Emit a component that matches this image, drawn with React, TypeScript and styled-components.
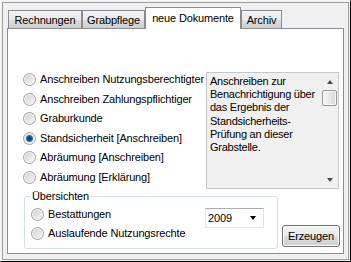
import React from 'react'
import styled, { createGlobalStyle } from 'styled-components'

const GlobalStyle = createGlobalStyle`
  html, body {
    margin: 0;
    padding: 0;
    background: #f0f0f0;
  }
  body {
    font-family: "Liberation Sans", Arial, sans-serif;
    font-size: 11px;
    letter-spacing: -0.15px;
    color: #000;
  }
`

const tabs = ['Rechnungen', 'Grabpflege', 'neue Dokumente', 'Archiv']
const tabWidths = [74, 63, 96, 41]

const options = [
  'Anschreiben Nutzungsberechtigter',
  'Anschreiben Zahlungspflichtiger',
  'Graburkunde',
  'Standsicherheit [Anschreiben]',
  'Abräumung [Anschreiben]',
  'Abräumung [Erklärung]',
]

const description =
  'Anschreiben zur\nBenachrichtigung über\ndas Ergebnis der\nStandsicherheits-\nPrüfung an dieser\nGrabstelle.'

const App = () => {
  const activeTab = 2
  const selected = 3
  return (
    <>
      <GlobalStyle />
      <Window>
        <Frame>
          <TabStrip>
            {tabs.map((t, i) => (
              <Tab key={t} $active={i === activeTab} $width={tabWidths[i]}>
                {t}
              </Tab>
            ))}
          </TabStrip>
          <Panel>
            <TopSection>
              <OptionList>
                {options.map((o, i) => (
                  <OptionRow key={o}>
                    <Radio $checked={i === selected} />
                    <Label>{o}</Label>
                  </OptionRow>
                ))}
              </OptionList>
              <InfoBox>
                <InfoText>{description}</InfoText>
                <ScrollBar>
                  <ScrollButton>
                    <ArrowUp />
                  </ScrollButton>
                  <ScrollThumb />
                  <ScrollTrack />
                  <ScrollButton>
                    <ArrowDown />
                  </ScrollButton>
                </ScrollBar>
              </InfoBox>
            </TopSection>
            <BottomSection>
              <GroupBox>
                <Legend>Übersichten</Legend>
                <GroupBody>
                  <GroupOptions>
                    <GroupRow>
                      <Radio />
                      <Label>Bestattungen</Label>
                    </GroupRow>
                    <GroupRow>
                      <Radio />
                      <Label>Auslaufende Nutzungsrechte</Label>
                    </GroupRow>
                  </GroupOptions>
                  <Combo>
                    <ComboValue>2009</ComboValue>
                    <ArrowDown $dark />
                  </Combo>
                </GroupBody>
              </GroupBox>
              <Button>Erzeugen</Button>
            </BottomSection>
          </Panel>
        </Frame>
      </Window>
    </>
  )
}
export default App

const Window = styled.div`
  width: 351px;
  height: 262px;
  box-sizing: border-box;
  border: 1px solid;
  border-color: #f7f7f7 #000 #000 #f7f7f7;
  padding: 1px;
  background: #f0f0f0;
`

const Frame = styled.div`
  height: 100%;
  box-sizing: border-box;
  border: 1px solid #a0a0a0;
  padding: 4px 0 0 4px;
`

const TabStrip = styled.div`
  display: flex;
  height: 21px;
  padding-left: 1px;
`

const Tab = styled.div<{ $active?: boolean; $width: number }>`
  box-sizing: border-box;
  width: ${(p) => p.$width}px;
  height: ${(p) => (p.$active ? 22 : 18)}px;
  margin-top: ${(p) => (p.$active ? 0 : 3)}px;
  border: 1px solid #898c95;
  border-bottom: none;
  background: ${(p) =>
    p.$active ? '#fff' : 'linear-gradient(#f2f2f2 0%, #ebebeb 50%, #dddddd 51%, #cfcfcf 100%)'};
  display: flex;
  justify-content: center;
  align-items: ${(p) => (p.$active ? 'flex-start' : 'center')};
  padding-top: ${(p) => (p.$active ? 4 : 1)}px;
  position: relative;
  z-index: ${(p) => (p.$active ? 1 : 0)};
  white-space: nowrap;
  line-height: 13px;
`

const Panel = styled.div`
  width: 337px;
  height: 226px;
  box-sizing: border-box;
  border: 1px solid #898c95;
  background: #fff;
  padding: 43px 3px 5px 15px;
  display: flex;
  flex-direction: column;
`

const TopSection = styled.div`
  display: flex;
`

const OptionList = styled.div`
  width: 183px;
  margin-top: -2px;
  display: flex;
  flex-direction: column;
`

const OptionRow = styled.div`
  height: 19.5px;
  display: flex;
  align-items: center;
  gap: 4px;
  white-space: nowrap;
`

const Radio = styled.span<{ $checked?: boolean }>`
  position: relative;
  flex: none;
  width: 13px;
  height: 13px;
  box-sizing: border-box;
  border-radius: 50%;
  border: 1px solid #a2a2a2;
  background: linear-gradient(135deg, #cfcfcf 0%, #e4e4e4 50%, #f8f8f8 100%);
  box-shadow: inset 0 0 0 1px #f4f4f4;
  &::after {
    content: '';
    display: ${(p) => (p.$checked ? 'block' : 'none')};
    position: absolute;
    left: 2px;
    top: 2px;
    width: 7px;
    height: 7px;
    border-radius: 50%;
    background: radial-gradient(circle at 50% 50%, #0b2f63 0%, #1c5a9e 45%, #5ea6e0 100%);
  }
`

const Label = styled.span`
  line-height: 13px;
`

const InfoBox = styled.div`
  width: 133px;
  height: 117px;
  box-sizing: border-box;
  border: 1px solid #c4c8cc;
  background: #f0f0f0;
  display: flex;
  margin-right: 1px;
`

const InfoText = styled.div`
  flex: 1;
  padding: 2px 0 0 3px;
  white-space: pre-line;
  line-height: 13.2px;
  letter-spacing: -0.25px;
`

const ScrollBar = styled.div`
  width: 17px;
  display: flex;
  flex-direction: column;
`

const ScrollButton = styled.div`
  height: 17px;
  display: flex;
  align-items: center;
  justify-content: center;
`

const ScrollThumb = styled.div`
  height: 16px;
  margin: 0 1px;
  box-sizing: border-box;
  border: 1px solid #979797;
  border-radius: 2px;
  background: linear-gradient(90deg, #f3f3f3 0%, #e8e8e8 50%, #d8d8d8 100%);
  box-shadow: inset 0 0 0 1px #f8f8f8;
`

const ScrollTrack = styled.div`
  flex: 1;
`

const ArrowUp = styled.span`
  width: 0;
  height: 0;
  border-left: 3.5px solid transparent;
  border-right: 3.5px solid transparent;
  border-bottom: 4px solid #4a4a4a;
`

const ArrowDown = styled.span<{ $dark?: boolean }>`
  width: 0;
  height: 0;
  border-left: 3.5px solid transparent;
  border-right: 3.5px solid transparent;
  border-top: 4px solid ${(p) => (p.$dark ? '#000' : '#4a4a4a')};
`

const BottomSection = styled.div`
  display: flex;
  align-items: flex-end;
  gap: 4px;
  margin-top: 1px;
`

const GroupBox = styled.fieldset`
  margin: 0 0 0 1px;
  width: 254px;
  height: 59px;
  box-sizing: border-box;
  border: 1px solid #d5dfe5;
  border-radius: 3px;
  padding: 0 13px 0 6px;
  min-width: 0;
`

const Legend = styled.legend`
  padding: 0 1px;
  line-height: 13px;
`

const GroupBody = styled.div`
  display: flex;
  justify-content: space-between;
  align-items: flex-start;
`

const GroupOptions = styled.div`
  display: flex;
  flex-direction: column;
  padding-top: 2px;
`

const GroupRow = styled.div`
  height: 19px;
  display: flex;
  align-items: center;
  gap: 4px;
  white-space: nowrap;
`

const Combo = styled.div`
  margin-top: 5px;
  width: 59px;
  height: 20px;
  box-sizing: border-box;
  border: 1px solid;
  border-color: #abadb3 #dbdfe6 #e3e9ef #e2e3ea;
  background: #fff;
  display: flex;
  align-items: center;
  padding: 0 7px 0 2px;
  justify-content: space-between;
`

const ComboValue = styled.span`
  line-height: 13px;
`

const Button = styled.button`
  width: 58px;
  height: 22px;
  margin-bottom: 2px;
  box-sizing: border-box;
  border: 1px solid #707070;
  border-radius: 3px;
  background: linear-gradient(#f2f2f2 0%, #ebebeb 50%, #dddddd 51%, #cfcfcf 100%);
  box-shadow: inset 0 0 0 1px #fcfcfc;
  font-family: "Liberation Sans", Arial, sans-serif;
  font-size: 11px;
  letter-spacing: -0.15px;
  color: #000;
  padding: 0;
`
